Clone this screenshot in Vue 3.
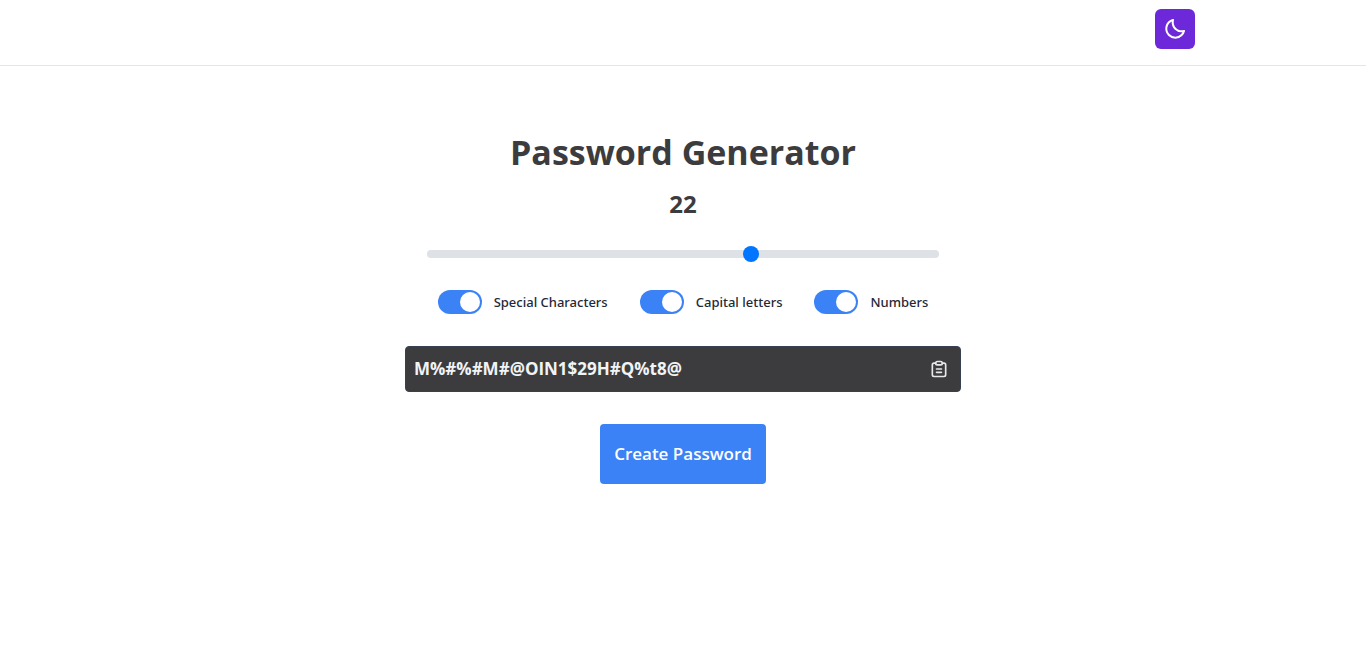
<script setup>
import { ref, reactive } from 'vue'

const length = ref(22)
const password = ref('M%#%#M#@OIN1$29H#Q%t8@')
const dark = ref(false)
const options = reactive([
  { id: 'special', label: 'Special Characters', on: true, chars: '!@#$%&*' },
  { id: 'capital', label: 'Capital letters', on: true, chars: 'ABCDEFGHIJKLMNOPQRSTUVWXYZ' },
  { id: 'numbers', label: 'Numbers', on: true, chars: '0123456789' },
])

function createPassword() {
  const pool = options.reduce((all, o) => (o.on ? all + o.chars : all), 'abcdefghijklmnopqrstuvwxyz')
  password.value = Array.from({ length: Number(length.value) }, () => pool[Math.floor(Math.random() * pool.length)]).join('')
}

function copyPassword() {
  navigator.clipboard?.writeText(password.value)
}
</script>

<template>
  <div class="page" :class="{ dark }">
    <header class="bar">
      <button class="theme" type="button" aria-label="Toggle dark mode" @click="dark = !dark">
        <svg width="24" height="24" viewBox="0 0 24 24" fill="currentColor">
          <path d="M20.742 13.045a8.088 8.088 0 0 1-2.077.271c-2.135 0-4.14-.83-5.646-2.336a8.025 8.025 0 0 1-2.064-7.723A1 1 0 0 0 9.73 2.034a10.014 10.014 0 0 0-4.489 2.582c-3.898 3.898-3.898 10.243 0 14.143a9.937 9.937 0 0 0 7.072 2.93 9.93 9.93 0 0 0 7.07-2.929 10.007 10.007 0 0 0 2.583-4.491 1.001 1.001 0 0 0-1.224-1.224zm-2.772 4.301a7.947 7.947 0 0 1-5.656 2.343 7.953 7.953 0 0 1-5.658-2.344c-3.118-3.119-3.118-8.195 0-11.314a7.923 7.923 0 0 1 2.06-1.483 10.027 10.027 0 0 0 2.89 7.848 9.972 9.972 0 0 0 7.848 2.891 8.036 8.036 0 0 1-1.484 2.059z" />
        </svg>
      </button>
    </header>

    <main class="content">
      <h1>Password Generator</h1>
      <label class="count" for="length">{{ length }}</label>
      <input id="length" v-model="length" class="slider" type="range" min="8" max="30" />

      <div class="options">
        <label v-for="o in options" :key="o.id" class="option" :for="o.id">
          <input :id="o.id" v-model="o.on" class="switch" type="checkbox" />
          <span>{{ o.label }}</span>
        </label>
      </div>

      <div class="result">
        <span class="password">{{ password }}</span>
        <button class="copy" type="button" aria-label="Copy password" @click="copyPassword">
          <svg width="20" height="20" viewBox="0 0 24 24" fill="none" stroke="currentColor" stroke-width="2" stroke-linecap="round" stroke-linejoin="round">
            <path d="M8 5H6a2 2 0 00-2 2v12a2 2 0 002 2h12a2 2 0 002-2V7a2 2 0 00-2-2h-2" />
            <path d="M8 5a2 2 0 012-2h4a2 2 0 012 2a2 2 0 01-2 2h-4a2 2 0 01-2-2z" />
            <path d="M9 12h6M9 16h6" />
          </svg>
        </button>
      </div>

      <button class="create" type="button" @click="createPassword">Create Password</button>
    </main>
  </div>
</template>

<style>
body {
  margin: 0;
}
</style>

<style scoped>
.page {
  min-height: 100vh;
  box-sizing: border-box;
  background: #fff;
  color: #3c3c3e;
  font-family: "Open Sans", "Noto Sans", sans-serif;
}
.page.dark {
  background: #1f2024;
  color: #f1f3f5;
}
button {
  border: 0;
  padding: 0;
  font-family: inherit;
  cursor: pointer;
}
.bar {
  display: flex;
  justify-content: flex-end;
  padding: 9px 12.5% 16px;
  border-bottom: 1px solid #e5e5e5;
}
.theme {
  display: flex;
  align-items: center;
  justify-content: center;
  width: 40px;
  height: 40px;
  border-radius: 6px;
  background: #6d28d9;
  color: #fff;
}
.content {
  display: flex;
  flex-direction: column;
  align-items: center;
  padding: 64px 16px 32px;
}
h1 {
  margin: 0;
  font-size: 34px;
  line-height: 44px;
  font-weight: 700;
}
.count {
  margin-top: 12px;
  font-size: 24px;
  line-height: 36px;
  font-weight: 700;
}
.slider {
  appearance: none;
  width: 100%;
  max-width: 512px;
  height: 8px;
  margin: 28px 0 0;
  border-radius: 4px;
  background: #dee2e6;
}
.slider::-webkit-slider-thumb {
  appearance: none;
  width: 16px;
  height: 16px;
  border-radius: 50%;
  background: #0075ff;
}
.options {
  display: flex;
  flex-wrap: wrap;
  justify-content: center;
  gap: 16px 32px;
  margin-top: 32px;
}
.option {
  display: flex;
  align-items: center;
  gap: 12px;
  font-family: "Noto Sans", "Open Sans", sans-serif;
  font-size: 13px;
  line-height: 24px;
  font-weight: 500;
  color: #1f2937;
}
.dark .option {
  color: #f1f3f5;
}
.switch {
  appearance: none;
  display: flex;
  align-items: center;
  box-sizing: border-box;
  width: 44px;
  height: 24px;
  margin: 0;
  padding: 2px;
  border-radius: 12px;
  background: #dee2e6;
}
.switch::before {
  content: "";
  width: 20px;
  height: 20px;
  border-radius: 50%;
  background: #fff;
}
.switch:checked {
  justify-content: flex-end;
  background: #3b82f6;
}
.result {
  display: flex;
  align-items: center;
  justify-content: space-between;
  box-sizing: border-box;
  width: 100%;
  max-width: 556px;
  min-height: 46px;
  margin-top: 32px;
  padding: 0 11px 0 8px;
  border: 1px solid #374151;
  border-radius: 4px;
  background: #3c3c3e;
  color: #f1f3f5;
}
.password {
  font-size: 17px;
  line-height: 28px;
  font-weight: 700;
}
.copy {
  display: flex;
  background: none;
  color: #e5e7eb;
}
.create {
  margin-top: 32px;
  padding: 16px 14px;
  border-radius: 4px;
  background: #3b82f6;
  color: #fff;
  font-size: 17px;
  line-height: 28px;
  font-weight: 600;
}
</style>
